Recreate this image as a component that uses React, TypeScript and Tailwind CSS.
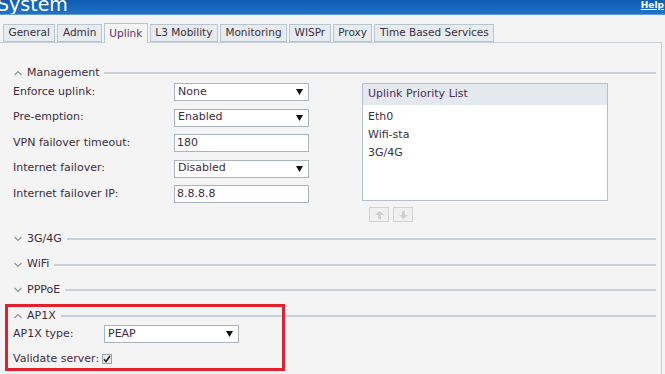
import React from "react";

const F = { fontFamily: '"DejaVu Sans", Verdana, sans-serif' };

function Chevron({ up }: { up: boolean }) {
  return (
    <svg width="8" height="6" viewBox="0 0 8 6" className="shrink-0">
      {up ? (
        <path d="M0.5 5 L4 1.5 L7.5 5" fill="none" stroke="#8a949c" strokeWidth="1.2" />
      ) : (
        <path d="M0.5 1 L4 4.5 L7.5 1" fill="none" stroke="#8a949c" strokeWidth="1.2" />
      )}
    </svg>
  );
}

function Legend({ title, up }: { title: string; up: boolean }) {
  return (
    <div className="flex items-center h-[12px] pl-[14px] pr-[5px]">
      <Chevron up={up} />
      <span className="ml-[5px] mr-[5px] text-[11px] text-[#3b2e40]">{title}</span>
      <div className="flex-1 h-[2px] bg-[#c7d1da]" />
    </div>
  );
}

function Select({ value, w }: { value: string; w: string }) {
  return (
    <div className={`${w} h-[18px] bg-white border border-[#a9b4bd] flex items-center justify-between pl-[3px] pr-[5px]`}>
      <span className="text-[11px] text-[#3b2e40]">{value}</span>
      <svg width="7" height="6" viewBox="0 0 7 6">
        <path d="M0 0 L7 0 L3.5 6 Z" fill="#111" />
      </svg>
    </div>
  );
}

function Input({ value }: { value: string }) {
  return (
    <div className="w-[135px] h-[18px] bg-white border border-[#a9b4bd] flex items-center pl-[2px]">
      <span className="text-[11px] text-[#3b2e40]">{value}</span>
    </div>
  );
}

export default function App() {
  const tabs = ["General", "Admin", "Uplink", "L3 Mobility", "Monitoring", "WISPr", "Proxy", "Time Based Services"];
  return (
    <div style={F} className="w-[665px] h-[374px] bg-[#f4f4f4] overflow-hidden relative">
      {/* header */}
      <div className="h-[15px] bg-gradient-to-b from-[#0f5db3] to-[#1f73c6] flex items-start justify-between border-b border-[#5d9ad6] overflow-hidden">
        <span className="text-white text-[19px] leading-none -mt-[5px] -ml-[3px]">System</span>
        <span className="text-white text-[9px] font-bold underline leading-none mt-[1px] mr-[1px]">Help</span>
      </div>
      {/* tabs */}
      <div className="flex items-end pl-[3px] gap-[2px] mt-[8px] relative z-10">
        {tabs.map((t) => (
          <div
            key={t}
            className={
              t === "Uplink"
                ? "h-[20px] px-[4.5px] flex items-center border border-b-0 border-[#b7c6d2] bg-[#f4f4f4] text-[10.5px] text-[#5b2f6b] -mb-[1px]"
                : "h-[18px] px-[4.5px] flex items-center border border-[#b7c6d2] bg-[#e6ecf0] text-[10.5px] text-[#3b2e40]"
            }
          >
            {t}
          </div>
        ))}
      </div>
      {/* panel */}
      <div className="border border-[#c5d0d9] mr-[3px] -ml-[1px] h-[340px] pt-[24px]">
        <Legend title="Management" up />
        <div className="flex mt-[4px]">
          <div className="flex flex-col gap-[7.5px] pl-[13px]">
            {[
              ["Enforce uplink:", <Select value="None" w="w-[135px]" />],
              ["Pre-emption:", <Select value="Enabled" w="w-[135px]" />],
              ["VPN failover timeout:", <Input value="180" />],
              ["Internet failover:", <Select value="Disabled" w="w-[135px]" />],
              ["Internet failover IP:", <Input value="8.8.8.8" />],
            ].map(([l, c], i) => (
              <div key={i} className="flex items-center h-[18px]">
                <span className="w-[161px] text-[11px] text-[#3b2e40]">{l as string}</span>
                {c}
              </div>
            ))}
          </div>
          <div className="ml-[53px] flex flex-col">
            <div className="w-[246px] h-[118px] border border-[#b3c0cb] bg-white flex flex-col">
              <div className="h-[21px] bg-[#e3e9ee] flex items-center pl-[5px] text-[11px] text-[#4b2d5a]">Uplink Priority List</div>
              <div className="flex flex-col pl-[5px] pt-[5px] gap-[4px] text-[11px] text-[#3b2e40] leading-[14px]">
                <span>Eth0</span>
                <span>Wifi-sta</span>
                <span>3G/4G</span>
              </div>
            </div>
            <div className="flex gap-[4px] mt-[6px] ml-[7px]">
              {[true, false].map((up, i) => (
                <div key={i} className="w-[20px] h-[15px] border border-[#d2d2d2] bg-[#f0f0f0] flex items-center justify-center">
                  <svg width="9" height="8" viewBox="0 0 9 8">
                    {up ? (
                      <path d="M4.5 0 L9 4 L6 4 L6 8 L3 8 L3 4 L0 4 Z" fill="#cfcfcf" />
                    ) : (
                      <path d="M4.5 8 L9 4 L6 4 L6 0 L3 0 L3 4 L0 4 Z" fill="#cfcfcf" />
                    )}
                  </svg>
                </div>
              ))}
            </div>
          </div>
        </div>
        <div className="mt-[11px] flex flex-col gap-[13.7px]">
          <Legend title="3G/4G" up={false} />
          <Legend title="WiFi" up={false} />
          <Legend title="PPPoE" up={false} />
          <Legend title="AP1X" up />
        </div>
        <div className="pl-[13px] mt-[3px] flex items-center h-[18px]">
          <span className="w-[91px] text-[11px] text-[#3b2e40]">AP1X type:</span>
          <Select value="PEAP" w="w-[135px]" />
        </div>
        <div className="pl-[13px] mt-[10px] flex items-center h-[12px]">
          <span className="text-[11px] text-[#3b2e40] mr-[3px]">Validate server:</span>
          <div className="w-[10px] h-[10px] border border-[#9aa4ac] bg-[#e8e8e8] flex items-center justify-center">
            <svg width="8" height="8" viewBox="0 0 8 8">
              <path d="M1 4.2 L3 6.5 L7 1" fill="none" stroke="#222" strokeWidth="1.6" />
            </svg>
          </div>
        </div>
      </div>
      {/* annotation */}
      <div className="absolute left-[5px] top-[304px] w-[280px] h-[67px] border-[3px] border-[#e3202b] pointer-events-none" />
    </div>
  );
}
